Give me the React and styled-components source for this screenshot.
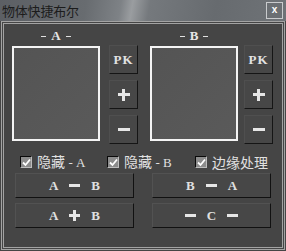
import React from 'react';
import styled, { createGlobalStyle } from 'styled-components';

const Global = createGlobalStyle`
  html, body { margin: 0; padding: 0; background: #454545; }
  body { width: 286px; height: 251px; overflow: hidden; }
`;

const Window = styled.div`
  width: 286px;
  height: 251px;
  background: #454545;
  display: flex;
  flex-direction: column;
  font-family: "Liberation Serif", "Noto Sans CJK SC", serif;
`;

const TitleBar = styled.div`
  height: 21px;
  flex: none;
  display: flex;
  align-items: center;
  justify-content: space-between;
  padding: 0 3px 0 2px;
  box-sizing: border-box;
  background: linear-gradient(100deg, #5c5f64 0%, #686c70 30%, #7e8286 42%, #9a9da0 46%, #75797d 52%, #676b6f 75%, #6f7377 100%);
`;

const Title = styled.span`
  font-family: "Noto Sans CJK SC", sans-serif;
  font-size: 13px;
  color: #1c1c1c;
  line-height: 17px;
  letter-spacing: -0.2px;
`;

const Close = styled.div`
  width: 15px;
  height: 14px;
  border: 1px solid #c9cbcd;
  background: #6b6f73;
  color: #fff;
  font-family: "Liberation Sans", sans-serif;
  font-weight: bold;
  font-size: 10px;
  display: flex;
  align-items: center;
  justify-content: center;
  line-height: 1;
  padding-bottom: 1px;
  box-sizing: content-box;
`;

const Frame = styled.div`
  flex: 1;
  margin: 0 1px 1px 1px;
  border: 3px double #a3a3a3;
  display: flex;
  flex-direction: column;
  padding: 6px 0 0 8px;
`;

const TopRow = styled.div`
  display: flex;
  gap: 12px;
`;

const Group = styled.div`
  display: flex;
  flex-direction: column;
`;

const Label = styled.div`
  width: 88px;
  height: 16px;
  display: flex;
  justify-content: center;
  align-items: flex-start;
  gap: 5px;
  color: #e6e6e6;
  font-family: "Liberation Serif", serif;
  font-size: 13px;
  font-weight: bold;
  line-height: 12px;
`;

const Tick = styled.span`
  width: 5px;
  height: 1px;
  margin-top: 6px;
  background: #e0e0e0;
`;

const BoxRow = styled.div`
  display: flex;
  gap: ${p => p.$gap}px;
`;

const PickBox = styled.div`
  width: 84px;
  height: 91px;
  border: 2px solid #f4f4f4;
  background: linear-gradient(135deg, #545454, #5a5a5a);
`;

const ToolCol = styled.div`
  display: flex;
  flex-direction: column;
  gap: 6px;
  margin-top: -1px;
`;

const ToolButton = styled.div`
  width: 27px;
  height: 27px;
  background: #474747;
  border-top: 1px solid #4f4f4f;
  border-left: 1px solid #4f4f4f;
  border-right: 1px solid #151515;
  border-bottom: 1px solid #151515;
  box-sizing: content-box;
  display: flex;
  align-items: center;
  justify-content: center;
  color: #e2e2e2;
  font-family: "Liberation Serif", serif;
  font-weight: bold;
  font-size: 13px;
  letter-spacing: 1px;
  line-height: 1;
`;

const CheckRow = styled.div`
  display: grid;
  grid-template-columns: 87px 88px 1fr;
  margin: 10px 0 0 8px;
  height: 15px;
`;

const CheckItem = styled.label`
  display: flex;
  align-items: center;
  gap: 5px;
  color: #e0e0e0;
  font-size: 14px;
  line-height: 15px;
`;

const Box = styled.span`
  width: 10px;
  height: 10px;
  background: #8c8c8c;
  border-top: 1px solid #0a0a0a;
  border-left: 1px solid #0a0a0a;
  border-right: 1px solid #bdbdbd;
  border-bottom: 1px solid #bdbdbd;
  display: flex;
  align-items: center;
  justify-content: center;
`;

const Serif = styled.span`
  font-family: "Liberation Serif", serif;
  font-size: 13px;
`;

const Cjk = styled.span`
  font-family: "Noto Sans CJK SC", sans-serif;
`;

const OpGrid = styled.div`
  display: grid;
  grid-template-columns: 119px 119px;
  column-gap: 18px;
  row-gap: 5px;
  margin: 4px 0 0 3px;
`;

const OpButton = styled.div`
  height: 23px;
  background: #474747;
  border-top: 1px solid #525252;
  border-left: 1px solid #525252;
  border-right: 1px solid #111;
  border-bottom: 1px solid #111;
  display: flex;
  align-items: center;
  justify-content: center;
  gap: 11px;
  color: #e0e0e0;
  font-family: "Liberation Serif", serif;
  font-weight: bold;
  font-size: 13px;
`;

const Dash = styled.span`
  width: ${p => p.$w || 11}px;
  height: 3px;
  background: #e6e6e6;
`;

const Plus = styled.span`
  position: relative;
  width: ${p => p.$s || 11}px;
  height: ${p => p.$s || 11}px;
  &::before, &::after {
    content: '';
    position: absolute;
    background: #e6e6e6;
  }
  &::before { left: 0; right: 0; top: 50%; height: 3px; margin-top: -1.5px; }
  &::after { top: 0; bottom: 0; left: 50%; width: 3px; margin-left: -1.5px; }
`;

const Check = () => (
  <Box>
    <svg width="9" height="9" viewBox="0 0 9 9">
      <path d="M1 4.5 L3.5 7 L8 1.5" fill="none" stroke="#fff" strokeWidth="1.8" />
    </svg>
  </Box>
);

const Side = ({ name, gap }) => (
  <Group>
    <Label><Tick />{name}<Tick /></Label>
    <BoxRow $gap={gap}>
      <PickBox />
      <ToolCol>
        <ToolButton>PK</ToolButton>
        <ToolButton><Plus $s={12} /></ToolButton>
        <ToolButton><Dash $w={12} /></ToolButton>
      </ToolCol>
    </BoxRow>
  </Group>
);

export default function App() {
  return (
    <Window>
      <Global />
      <TitleBar>
        <Title>物体快捷布尔</Title>
        <Close>x</Close>
      </TitleBar>
      <Frame>
        <TopRow>
          <Side name="A" gap={9} />
          <Side name="B" gap={6} />
        </TopRow>
        <CheckRow>
          <CheckItem>
            <Check />
            <span><Cjk>隐藏</Cjk> <Serif>- A</Serif></span>
          </CheckItem>
          <CheckItem>
            <Check />
            <span><Cjk>隐藏</Cjk> <Serif>- B</Serif></span>
          </CheckItem>
          <CheckItem>
            <Check />
            <Cjk>边缘处理</Cjk>
          </CheckItem>
        </CheckRow>
        <OpGrid>
          <OpButton><span>A</span><Dash /><span>B</span></OpButton>
          <OpButton><span>B</span><Dash /><span>A</span></OpButton>
          <OpButton><span>A</span><Plus /><span>B</span></OpButton>
          <OpButton><Dash /><span>C</span><Dash /></OpButton>
        </OpGrid>
      </Frame>
    </Window>
  );
}
